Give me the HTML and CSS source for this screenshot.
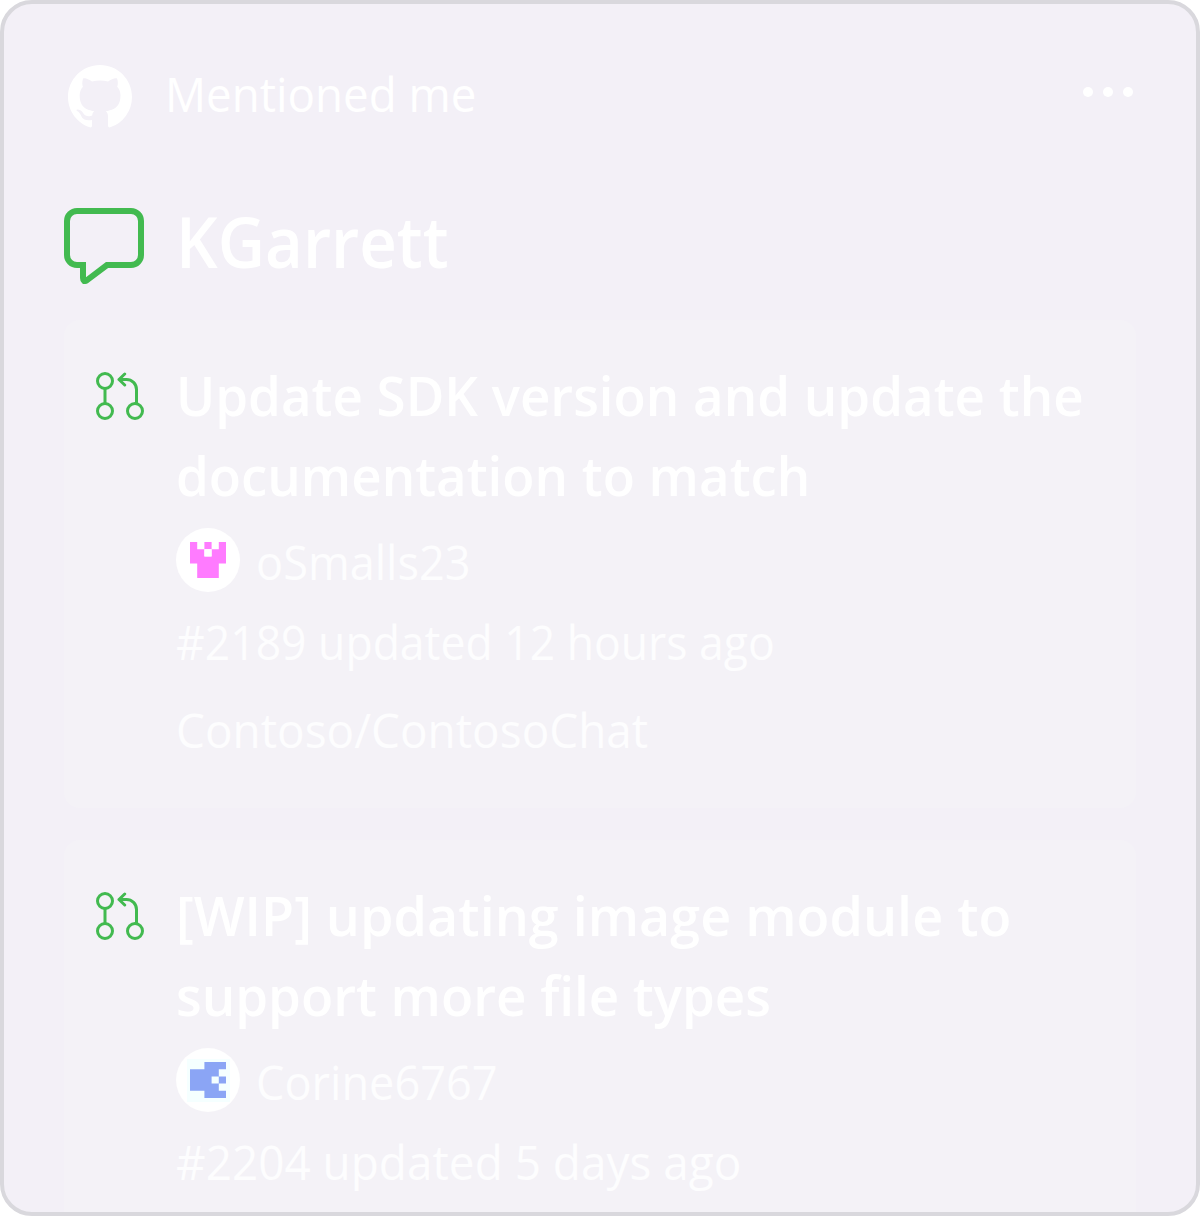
FILE: index.html
```html
<!DOCTYPE html>
<html lang="en">
<head>
<meta charset="utf-8">
<title>Mentioned me</title>
<link rel="stylesheet" href="styles.css">
</head>
<body>
<svg class="defs" aria-hidden="true">
  <symbol id="pull-request" viewBox="0 0 48 48">
    <g fill="none" stroke="currentColor" stroke-width="3" stroke-linecap="round" stroke-linejoin="round">
      <circle cx="9" cy="9" r="7.5"/><circle cx="9" cy="39" r="7.5"/><circle cx="39" cy="39" r="7.5"/>
      <path d="M9 16.5v15M40.500 31V17.500a10 10 0 0 0-10-10H23M28.700 2L23 7.500l5.700 5.500"/>
    </g>
  </symbol>
</svg>
<main class="widget">
  <header class="widget-header">
    <svg class="github" viewBox="0 0 16 16"><path fill="currentColor" d="M8 0C3.58 0 0 3.58 0 8c0 3.540 2.290 6.530 5.470 7.590.4.070.55-.17.55-.38 0-.19-.01-.82-.01-1.490-2.010.37-2.530-.49-2.690-.94-.09-.23-.48-.94-.82-1.130-.28-.15-.68-.52-.01-.53.63-.01 1.080.58 1.230.82.72 1.210 1.870.87 2.330.66.07-.52.28-.87.51-1.070-1.780-.2-3.640-.89-3.640-3.950 0-.87.31-1.590.82-2.150-.08-.2-.36-1.020.08-2.120 0 0 .67-.21 2.200.82.64-.18 1.320-.27 2-.27s1.360.09 2 .27c1.530-1.040 2.200-.82 2.200-.82.44 1.100.16 1.920.08 2.120.51.56.82 1.270.82 2.150 0 3.070-1.870 3.750-3.650 3.950.29.25.54.73.54 1.480 0 1.070-.01 1.930-.01 2.200 0 .21.15.46.55.38A8.010 8.010 0 0 0 16 8c0-4.420-3.580-8-8-8z"/></svg>
    <span class="source">Mentioned me</span>
    <span class="more"><i></i><i></i><i></i></span>
  </header>
  <div class="person">
    <svg class="bubble" viewBox="0 0 80 76"><path d="M13 3h54a10 10 0 0 1 10 10v34a10 10 0 0 1-10 10H43L22.800 72.300Q19 74.500 19 70V57h-6a10 10 0 0 1-10-10V13a10 10 0 0 1 10-10z" fill="none" stroke="currentColor" stroke-width="6"/></svg>
    <h1>KGarrett</h1>
  </div>
  <article class="card">
    <svg class="pr"><use href="#pull-request"/></svg>
    <div class="details">
      <h2><span class="line">Update SDK version and update the</span><span class="line">documentation to match</span></h2>
      <div class="author">
        <span class="avatar"><svg class="pink" viewBox="0 0 5 5"><path fill="currentColor" d="M0 0H1V1H2V2H3V1H4V0H5V3H4V5H1V3H0ZM2 0H3V1H2Z"/><path fill="#fff" d="M2 1H3V2H2Z"/></svg></span>
        <span class="name">oSmalls23</span>
      </div>
      <p class="meta tight">#2189 updated 12 hours ago</p>
      <p class="repo">Contoso/ContosoChat</p>
    </div>
  </article>
  <article class="card">
    <svg class="pr"><use href="#pull-request"/></svg>
    <div class="details">
      <h2><span class="line wide">[WIP] updating image module to</span><span class="line">support more file types</span></h2>
      <div class="author">
        <span class="avatar mint"><svg class="blue" viewBox="0 0 5 5"><path fill="currentColor" d="M2 0H5V1H4V2H5V3H4V4H5V5H2V4H0V1H2Z"/><path fill="#f5ffff" d="M3 2H4V3H3Z"/></svg></span>
        <span class="name">Corine6767</span>
      </div>
      <p class="meta">#2204 updated 5 days ago</p>
    </div>
  </article>
</main>
</body>
</html>
```
FILE: styles.css
```css
* { box-sizing: border-box; }
body { margin: 0; background: #fff; font-family: "Open Sans", sans-serif; color: #fff; }
h1, h2, p { margin: 0; font-weight: 600; white-space: nowrap; }
svg { display: block; flex: none; }
.defs { position: absolute; width: 0; height: 0; }

.widget {
  height: 1216px;
  overflow: hidden;
  padding: 60px;
  border: 4px solid #d9d8dd;
  border-radius: 32px;
  background: #f3f0f7;
}
.widget-header { display: flex; height: 64px; padding-left: 4px; }
.github { width: 64px; height: 64px; margin-top: 1px; }
.source { margin-left: 33px; font-size: 47px; line-height: 60px; white-space: nowrap; transform: scaleX(.972); transform-origin: left; }
.more { display: flex; gap: 10px; margin: 23px 3px 0 auto; }
.more i { width: 10px; height: 10px; border-radius: 50%; background: #fff; }

.person { display: flex; height: 112px; margin-top: 80px; }
.bubble { width: 80px; height: 76px; color: #42ba50; }
h1 { height: 66px; margin-left: 32px; font-size: 70.5px; line-height: 66px; transform: scaleX(.926); transform-origin: left; }

.card {
  display: flex;
  height: 488px;
  margin-bottom: 32px;
  padding: 35px 32px 0;
  border-radius: 16px;
  background: #f4f2f7;
}
.pr { width: 48px; height: 48px; margin-top: 17px; color: #42ba50; }
.details { margin-left: 32px; }
h2 { width: 960px; font-size: 55px; line-height: 80px; }
.line { display: table; transform: scaleX(.96); transform-origin: left; }
.wide { transform: scaleX(.979); }
.author { display: flex; height: 64px; margin-top: 13px; }
.avatar { display: flex; align-items: center; justify-content: center; width: 64px; height: 64px; border-radius: 50%; background: #fff; }
.mint { background: linear-gradient(#f5ffff, #f5ffff) center / 43px 43px no-repeat #fff; }
.avatar svg { width: 36px; height: 36px; }
.pink { color: #ff7bff; }
.blue { color: #8ba5f5; }
.name, .meta, .repo {
  height: 64px;
  font-size: 47px;
  font-weight: 400;
  line-height: 68px;
  white-space: nowrap;
  color: #fdfdfe;
  transform: scaleX(.977);
  transform-origin: left;
}
.name { margin-left: 16px; transform: scaleX(.96); }
.meta { margin-top: 16px; }
.tight { transform: scaleX(.947); }
.repo { margin-top: 24px; }
```
